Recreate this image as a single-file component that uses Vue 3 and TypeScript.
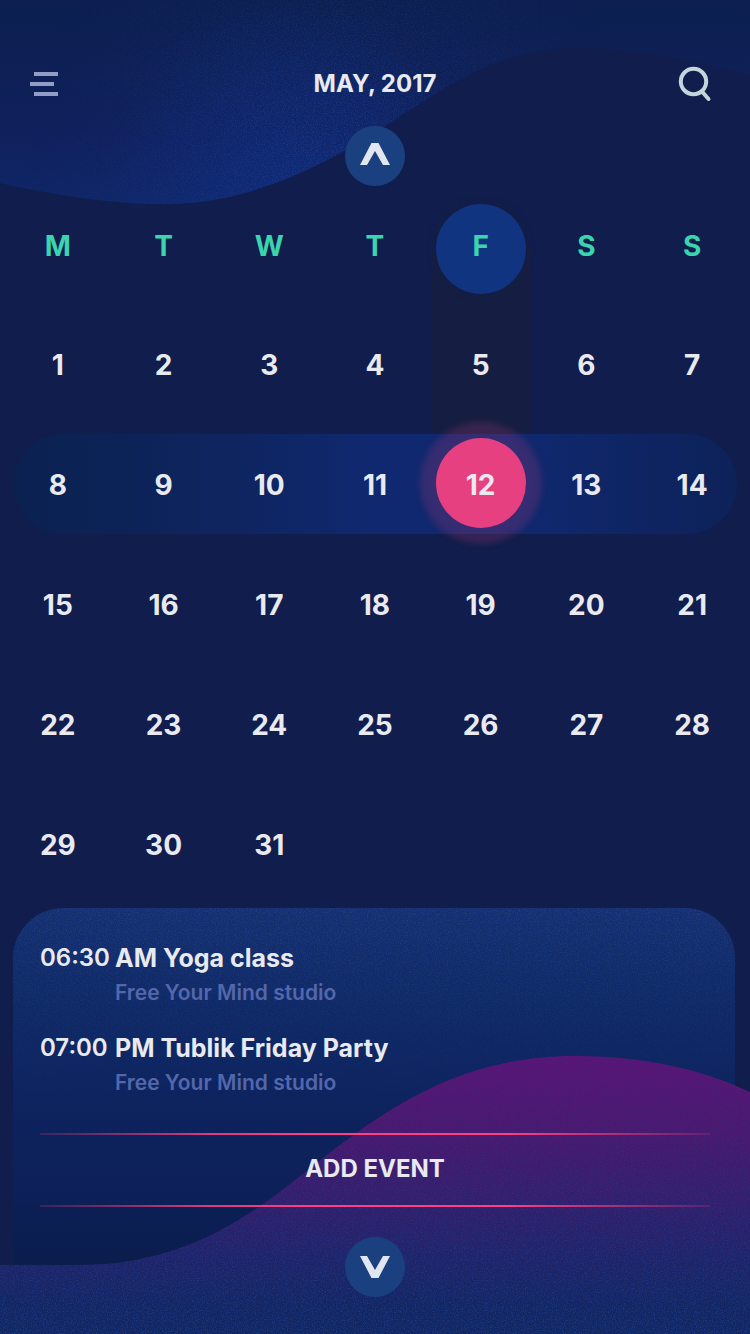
<script setup lang="ts">
import { ref } from 'vue'

interface CalendarEvent {
  time: string
  title: string
  place: string
}

const weekdays: string[] = ['M', 'T', 'W', 'T', 'F', 'S', 'S']
const weeks: number[][] = [0, 1, 2, 3, 4].map((w) =>
  Array.from({ length: 7 }, (_, d) => w * 7 + d + 1),
)
const lastDay = 31
const selected = ref<number>(12)

const weekOf = (day: number): number => Math.floor((day - 1) / 7)
const columnOf = (day: number): number => (day - 1) % 7

const events: CalendarEvent[] = [
  { time: '06:30', title: 'AM Yoga class', place: 'Free Your Mind studio' },
  { time: '07:00', title: 'PM Tublik Friday Party', place: 'Free Your Mind studio' },
]
</script>

<template>
  <main class="screen">
    <svg class="wave wave-top" viewBox="0 0 750 206" preserveAspectRatio="none" aria-hidden="true">
      <defs>
        <linearGradient id="topFill" x1="0" y1="0" x2="0" y2="1">
          <stop offset="0" stop-color="#0c1f50" />
          <stop offset="0.35" stop-color="#0e2056" />
          <stop offset="0.65" stop-color="#10205d" />
          <stop offset="1" stop-color="#0f2768" />
        </linearGradient>
        <radialGradient id="topGlow" gradientUnits="userSpaceOnUse" cx="290" cy="190" r="190">
          <stop offset="0" stop-color="#0f2c7c" stop-opacity="0.7" />
          <stop offset="0.5" stop-color="#0f2a76" stop-opacity="0.45" />
          <stop offset="1" stop-color="#0f2a76" stop-opacity="0" />
        </radialGradient>
        <radialGradient id="topGrain" gradientUnits="userSpaceOnUse" cx="330" cy="160" r="300">
          <stop offset="0" stop-color="#fff" />
          <stop offset="1" stop-color="#000" />
        </radialGradient>
        <filter id="grain" x="0" y="0" width="100%" height="100%" color-interpolation-filters="sRGB">
          <feTurbulence type="fractalNoise" baseFrequency="0.9" numOctaves="2" seed="4" />
          <feColorMatrix values="0 0 0 0 0.15  0 0 0 0 0.3  0 0 0 0 0.65  1.3 0 0 0 -0.55" />
        </filter>
        <clipPath id="topClip">
          <path d="M0 0H750V75C690 60 640 48 575 48C500 48 450 84 385 126C325 165 250 204 165 204C110 204 60 196 0 183Z" />
        </clipPath>
        <mask id="topMask"><rect width="750" height="206" fill="url(#topGrain)" /></mask>
      </defs>
      <g clip-path="url(#topClip)">
        <rect width="750" height="206" fill="url(#topFill)" />
        <rect width="750" height="206" fill="url(#topGlow)" />
        <g mask="url(#topMask)"><rect width="750" height="206" filter="url(#grain)" /></g>
      </g>
    </svg>

    <header class="bar">
      <button class="icon-button" type="button" aria-label="Menu">
        <svg width="28" height="24" viewBox="0 0 28 24" fill="#929dc5">
          <rect x="4" y="0" width="24" height="4" />
          <rect x="0" y="10" width="24" height="4" />
          <rect x="4" y="20" width="24" height="4" />
        </svg>
      </button>
      <h1>MAY, 2017</h1>
      <button class="icon-button search" type="button" aria-label="Search">
        <svg width="34" height="36" viewBox="0 0 34 36" fill="none" stroke="#c3d6dd" stroke-width="4" stroke-linecap="round">
          <circle cx="15.500" cy="15.500" r="12.700" />
          <path d="M24 25.500L30.500 33" />
        </svg>
      </button>
    </header>

    <button class="round previous" type="button" aria-label="Previous month">
      <svg width="30" height="22" viewBox="0 0 30 22" fill="#e2e6f0">
        <path d="M0 22L11.500 0H18.500L30 22H23L15 8L7 22Z" />
      </svg>
    </button>

    <table class="calendar">
      <thead>
        <tr>
          <th v-for="(name, i) in weekdays" :key="i" scope="col" :class="{ current: i === columnOf(selected) }">
            <span>{{ name }}</span>
          </th>
        </tr>
      </thead>
      <tbody>
        <tr v-for="(week, w) in weeks" :key="w" :class="{ band: w === weekOf(selected) }">
          <td
            v-for="(day, d) in week"
            :key="day"
            :class="{ trail: d === columnOf(selected) && w < weekOf(selected), chosen: day === selected }"
          >
            <button v-if="day <= lastDay" class="day" type="button" :aria-pressed="day === selected" @click="selected = day">
              {{ day }}
            </button>
          </td>
        </tr>
      </tbody>
    </table>

    <section class="agenda" aria-label="Events">
      <svg class="panel-grain" aria-hidden="true">
        <rect width="100%" height="100%" filter="url(#grain)" />
      </svg>
      <svg class="wave wave-bottom" viewBox="0 0 750 278" preserveAspectRatio="none" aria-hidden="true">
        <defs>
          <linearGradient id="bottomFill" x1="0" y1="0" x2="0" y2="1">
            <stop offset="0" stop-color="#581676" />
            <stop offset="0.28" stop-color="#49196f" />
            <stop offset="0.55" stop-color="#311f6b" />
            <stop offset="0.72" stop-color="#202368" />
            <stop offset="0.88" stop-color="#142562" />
            <stop offset="1" stop-color="#112660" />
          </linearGradient>
          <linearGradient id="bottomGrain" x1="0" y1="0" x2="0" y2="1">
            <stop offset="0" stop-color="#222" />
            <stop offset="1" stop-color="#fff" />
          </linearGradient>
          <clipPath id="bottomClip">
            <path d="M0 209H80C185 209 250 159 295 124C375 61 450 0 575 0C640 0 700 12 750 36V278H0Z" />
          </clipPath>
          <mask id="bottomMask"><rect width="750" height="278" fill="url(#bottomGrain)" /></mask>
        </defs>
        <g clip-path="url(#bottomClip)">
          <rect width="750" height="278" fill="url(#bottomFill)" />
          <g mask="url(#bottomMask)"><rect width="750" height="278" filter="url(#grain)" /></g>
        </g>
      </svg>

      <ul class="events">
        <li v-for="event in events" :key="event.time">
          <time>{{ event.time }}</time>
          <h2>{{ event.title }}</h2>
          <p>{{ event.place }}</p>
        </li>
      </ul>
      <button class="add" type="button">ADD EVENT</button>
      <button class="round next" type="button" aria-label="Next month">
        <svg width="30" height="22" viewBox="0 0 30 22" fill="#e2e6f0">
          <path d="M0 0L11.500 22H18.500L30 0H23L15 14L7 0Z" />
        </svg>
      </button>
    </section>
  </main>
</template>

<style>
body {
  margin: 0;
  background: #111d4c;
}
</style>

<style scoped>
.screen {
  position: relative;
  display: flex;
  flex-direction: column;
  min-height: 100vh;
  overflow: hidden;
  background: #111d4c;
  color: #e9eaf0;
  font-family: Inter, "Liberation Sans", sans-serif;
  font-weight: 700;
}

button {
  padding: 0;
  border: 0;
  background: none;
  color: inherit;
  font: inherit;
  cursor: pointer;
}

svg {
  display: block;
}

.wave {
  position: absolute;
  left: 0;
  width: 100%;
}

.wave-top {
  top: 0;
  height: 206px;
}

.wave-bottom {
  bottom: 0;
  height: 278px;
}

.bar {
  position: relative;
  display: grid;
  grid-template-columns: 1fr auto 1fr;
  align-items: center;
  height: 84px;
  padding: 42px 30px 0;
}

.icon-button {
  justify-self: start;
}

.search {
  justify-self: end;
  padding-right: 8px;
}

h1,
h2,
p {
  margin: 0;
  line-height: 32px;
}

h1,
.add,
time {
  font-size: 24px;
}

h2 {
  font-size: 25px;
}

.round {
  position: relative;
  display: grid;
  place-items: center;
  align-self: center;
  box-sizing: border-box;
  width: 60px;
  height: 60px;
  border-radius: 50%;
  background: #1b4080;
}

.previous {
  padding-bottom: 5px;
}

.next {
  margin-top: 30px;
}

.calendar {
  position: relative;
  width: calc(100% - 10px);
  margin: 0 5px;
  border-spacing: 0;
  table-layout: fixed;
  font-size: 28px;
}

th,
td {
  position: relative;
  height: 120px;
  padding: 0;
  text-align: center;
}

th {
  height: 119px;
  color: #3bd4ae;
}

th span,
.day {
  position: relative;
  z-index: 1;
}

.day {
  width: 60px;
  height: 60px;
}

.current::before {
  content: "";
  position: absolute;
  top: 64px;
  left: 50%;
  width: 100px;
  height: 55px;
  margin-left: -50px;
  background: #151e42;
}

.current::after,
.chosen::before {
  content: "";
  position: absolute;
  top: 18px;
  left: 50%;
  width: 90px;
  height: 90px;
  margin-left: -45px;
  border-radius: 50%;
  background: #10347f;
  box-shadow: 0 0 6px 2px #141e45;
}

.trail::before {
  content: "";
  position: absolute;
  top: 0;
  left: 50%;
  width: 100px;
  height: 130px;
  margin-left: -50px;
  background: #151e42;
}

.band td:first-child::after {
  content: "";
  position: absolute;
  top: 9px;
  left: 8px;
  width: calc(700% - 16px);
  height: 100px;
  border-radius: 50px;
  background: linear-gradient(90deg, #0a2150, #0e2560 30%, #10286f 50%, #10286f 70%, #0d2259);
}

.chosen::before {
  top: 13px;
  z-index: 1;
  background: #e64080;
  box-shadow: 0 0 6px 16px rgba(230, 64, 128, 0.18);
}

.agenda {
  position: relative;
  display: flex;
  flex: 1;
  flex-direction: column;
  margin-top: 3px;
  padding: 34px 40px 36px;
}

.agenda::before,
.panel-grain {
  content: "";
  position: absolute;
  top: 0;
  left: 13px;
  width: calc(100% - 28px);
  height: 100%;
  border-radius: 50px 50px 0 0;
  background: linear-gradient(#162f6d, #102a66 20%, #0d235e 48%, #0d2059 65%, #0a1d4c 84%);
}

.panel-grain {
  background: none;
  mask-image: linear-gradient(#000, transparent 45%);
}

.events {
  position: relative;
  display: grid;
  gap: 23px;
  margin: 0;
  padding: 0;
  list-style: none;
}

.events li {
  display: grid;
  grid-template-columns: 75px 1fr;
  row-gap: 3px;
  line-height: 32px;
}

time {
  font-weight: 600;
}

.events p {
  grid-column: 2;
  color: #5467ab;
  font-size: 21px;
  font-weight: 600;
}

.add {
  position: relative;
  height: 74px;
  margin-top: 34px;
  padding-bottom: 4px;
  background:
    linear-gradient(90deg, rgba(217, 59, 124, 0.2), #d93b7c 25%, #ff3f80 40%, #ff3f80 70%, rgba(217, 59, 124, 0.2)) top / 100% 2px no-repeat,
    linear-gradient(90deg, rgba(217, 59, 124, 0.2), #d93b7c 25%, #ff3f80 40%, #ff3f80 70%, rgba(217, 59, 124, 0.2)) bottom / 100% 2px no-repeat;
}
</style>
